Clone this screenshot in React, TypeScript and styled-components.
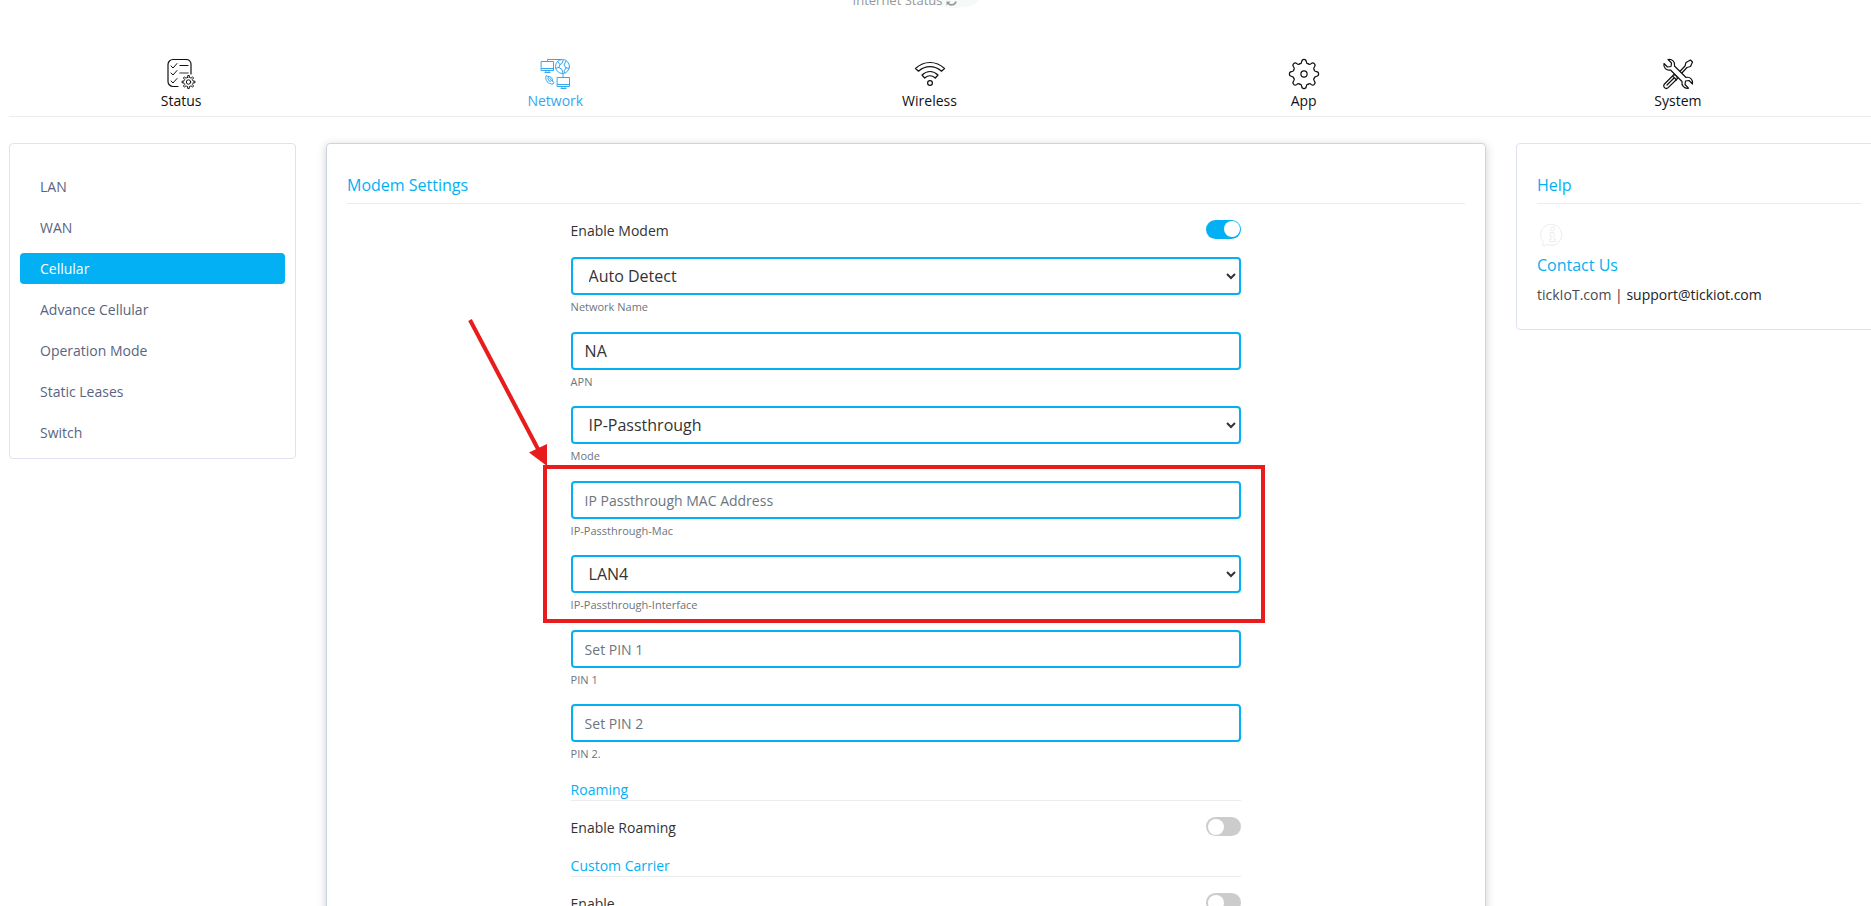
import React, { useState } from "react";
import styled, { createGlobalStyle, css } from "styled-components";

const accent = "#02b0f3";
const line = "#ececec";
const marker = "#e81c1c";

const GlobalStyle = createGlobalStyle`
  *, *::before, *::after { box-sizing: border-box; }
  html, body { margin: 0; background: #fff; overflow: hidden; height: 100vh; }
  body, input, select, button {
    font-family: "Open Sans", "Liberation Sans", sans-serif;
    font-size: 14px;
    color: #333;
  }
`;

const Page = styled.div`
  height: 100vh;
  overflow: hidden;
  padding-left: 9px;
`;

const TopBar = styled.header`
  display: flex;
  align-items: flex-end;
  justify-content: center;
  gap: 4px;
  height: 9px;
  padding-right: 70px;
  overflow: hidden;
  font-size: 13px;
  line-height: 18px;
  color: #94979a;
  background: radial-gradient(ellipse 25px 8px at calc(50% + 14px) 0, #f5faf9 96%, transparent 100%);
`;

const RefreshButton = styled.button`
  display: flex;
  align-items: center;
  height: 18px;
  padding: 0;
  border: 0;
  background: none;
  color: #999;
`;

const Nav = styled.nav`
  margin-top: 49px;
  height: 59px;
  border-bottom: 1px solid ${line};
`;

const TabList = styled.ul`
  display: flex;
  margin: 0 6px 0 -15px;
  padding: 0;
  list-style: none;
`;

const Tab = styled.li`
  flex: 1;
  display: flex;
  justify-content: center;
`;

const TabLink = styled.a<{ $active?: boolean }>`
  display: flex;
  flex-direction: column;
  align-items: center;
  line-height: 22px;
  text-decoration: none;
  color: ${(p) => (p.$active ? "#35a7f0" : "#111")};
`;

const Columns = styled.div`
  display: grid;
  grid-template-columns: 287fr 1160fr 367fr;
  gap: 30px;
  align-items: start;
  margin: 26px -12px 0 0;
`;

const Card = styled.section<{ $raised?: boolean }>`
  border: 1px solid #dfe2ef;
  border-radius: 4px;
  background: #fff;
  ${(p) =>
    p.$raised &&
    css`
      border-color: #ced3e6;
      box-shadow: 0 2px 8px rgba(60, 60, 80, 0.25);
    `}
`;

const SideCard = styled(Card)`
  padding: 27px 10px 10px;
`;

const SideList = styled.ul`
  display: flex;
  flex-direction: column;
  gap: 10px;
  margin: 0;
  padding: 0;
  list-style: none;
`;

const SideLink = styled.a<{ $active?: boolean }>`
  display: block;
  padding: 0 20px;
  border-radius: 4px;
  line-height: 31px;
  text-decoration: none;
  color: ${(p) => (p.$active ? "#fff" : "#59657f")};
  background: ${(p) => (p.$active ? accent : "transparent")};
`;

const BodyCard = styled(Card)`
  padding: 27px 20px 24px;
`;

const Title = styled.h2<{ $plain?: boolean }>`
  margin: 0;
  font-size: 16px;
  font-weight: 400;
  line-height: 28px;
  color: ${accent};
  ${(p) =>
    !p.$plain &&
    css`
      height: 33px;
      border-bottom: 1px solid ${line};
    `}
`;

const Form = styled.form`
  width: 60%;
  margin: 0 auto;
`;

const ToggleLine = styled.label`
  display: flex;
  align-items: center;
  justify-content: space-between;
  height: 53px;
`;

const Switch = styled.input`
  appearance: none;
  width: 35px;
  height: 19px;
  margin: 0 0 3px;
  border-radius: 10px;
  background: #ccc;
  &::before {
    content: "";
    display: block;
    width: 16px;
    height: 16px;
    margin: 2px;
    border-radius: 50%;
    background: #fff;
  }
  &:checked { background: ${accent}; }
  &:checked::before { margin: 1px 1px 1px 18px; }
`;

const Field = styled.div<{ $select?: boolean }>`
  display: flex;
  flex-direction: column;
  height: ${(p) => (p.$select ? 75 : 74)}px;
`;

const control = css`
  width: 100%;
  height: 38px;
  border: 2px solid ${accent};
  border-radius: 4px;
  background: #fff;
  font-size: 16px;
  outline: none;
`;

const TextInput = styled.input`
  ${control}
  padding: 0 12px;
  &::placeholder { font-size: 14px; color: #6c757d; opacity: 1; }
`;

const Select = styled.select`
  ${control}
  padding: 0 0 0 12px;
`;

const Hint = styled.label`
  margin-top: 4px;
  font-size: 11px;
  line-height: 16px;
  color: #6c757d;
`;

const Highlight = styled.div`
  position: relative;
  &::after {
    content: "";
    position: absolute;
    inset: -16px -24px 7px -28px;
    border: 4px solid ${marker};
    pointer-events: none;
  }
`;

const Arrow = styled.svg`
  position: absolute;
  left: -104px;
  top: -163px;
  pointer-events: none;
`;

const SubTitle = styled.h3`
  height: 23px;
  margin: 0;
  border-bottom: 1px solid ${line};
  font-size: 14px;
  font-weight: 400;
  line-height: 24px;
  color: ${accent};
`;

const InfoIcon = styled.svg`
  display: block;
  margin: 18px 0 3px 3px;
`;

const Contact = styled.p`
  margin: 6px 0 0;
  line-height: 20px;
`;

const ContactLink = styled.a<{ $dark?: boolean }>`
  text-decoration: none;
  color: ${(p) => (p.$dark ? "#222" : "#4a4a4a")};
`;

const stroke = {
  fill: "none",
  stroke: "currentColor",
  strokeWidth: 1.2,
  strokeLinecap: "round" as const,
  strokeLinejoin: "round" as const,
};

const gearPath = (cx: number, cy: number, r: number, R: number, teeth: number) => {
  const pts: string[] = [];
  const step = (Math.PI * 2) / teeth;
  for (let i = 0; i < teeth; i++) {
    const a = i * step - Math.PI / 2;
    const at = (rad: number, o: number) =>
      `${(cx + rad * Math.cos(a + o * step)).toFixed(2)} ${(cy + rad * Math.sin(a + o * step)).toFixed(2)}`;
    pts.push(`${i ? "L" : "M"}${at(r, -0.24)}L${at(R, -0.16)}L${at(R, 0.16)}L${at(r, 0.24)}`);
    pts.push(`A${r} ${r} 0 0 1 ${at(r, 0.76)}`);
  }
  return pts.join("") + "Z";
};

const StatusIcon = () => (
  <svg width="32" height="32" viewBox="-1 0 32 32" {...stroke}>
    <path d="M12 28.500H7a5 5 0 0 1-5-5V6.500a5 5 0 0 1 5-5h13.500a4.500 4.500 0 0 1 4.500 4.500v10" />
    <path d="M5 8l2 2 4-4.500M5 15l2 2 4-4.500M5 23l2 2 4-4.500" strokeWidth="1" />
    <path d="M14 7.500h8" strokeWidth="1.200" />
    <path d="M14 15h8" stroke="#777" strokeWidth="1.600" />
    <path d={gearPath(22.5, 24, 4.6, 6.5, 8)} strokeWidth="1" />
    <circle cx="22.500" cy="24" r="2.200" strokeWidth="1" />
  </svg>
);

const NetworkIcon = () => (
  <svg width="32" height="32" viewBox="-1 0 32 32" {...stroke} strokeWidth={1}>
    <rect x="1.500" y="3.500" width="12" height="9" />
    <path d="M1.500 10.500h12M5 14.500h5M6 12.500v2M9 12.500v2M7.500 3.500v-2h14" />
    <circle cx="22.500" cy="8.500" r="7" />
    <path d="M18 4l2 2.500-1 3-3 .5M20 6.500l2-1 1-3M26 3l-2 4 2 3 3 0M19 9.500l3 2 1 4M26 10l-2 3 1 2M23 15.500v4" />
    <rect x="17.500" y="19.500" width="12" height="9" />
    <path d="M17.500 26.500h12M21 30.500h5M22 28.500v2M25 28.500v2" />
    <path d="M6 18c-1.500 4 2 8.500 7 8l1-1.500-2.500-2-1.500 1c-1.500-.8-2-2-2-3.500l.5-1z" />
    <path d="M8.500 18.500c2.500 0 4 1.500 4 4M10 20.500l1 1.500" />
  </svg>
);

const WirelessIcon = () => (
  <svg width="32" height="32" viewBox="0 0 32 32" {...stroke}>
    <path d="M1.500 10.500C10 2.500 22 2.500 30.500 10.500L27.500 13.200C20.500 7.200 11.500 7.200 4.500 13.200z" />
    <path d="M8 17C13 12.500 19 12.500 24 17L21.300 20C18 17.200 14 17.200 10.700 20z" />
    <circle cx="16" cy="25" r="2.400" />
  </svg>
);

const AppIcon = () => (
  <svg width="32" height="32" viewBox="0 0 32 32" {...stroke}>
    {[0, 45, 90, 135, 180, 225, 270, 315].map((a) => (
      <path
        key={a}
        transform={`rotate(${a} 16 16)`}
        d="M11.800 5.800Q13.600 5.600 13.700 3.600Q13.900 1.400 16 1.400Q18.100 1.400 18.300 3.600Q18.400 5.600 20.200 5.800"
      />
    ))}
    <circle cx="16" cy="16" r="3.100" />
  </svg>
);

const SystemIcon = () => (
  <svg width="32" height="32" viewBox="0 0 32 32" {...stroke}>
    <path d="M14.500 18l-2.500-1.500-9.500 9.500a2.600 2.600 0 0 0 3.700 3.700l9.300-9.200zM10.500 18l4 4M5 27l7-7M16 15.500l7-7.500 1-3.500L28.500 2 30.500 4l-2 4.500L25 9.500 18 17" />
    <path
      fill="#fff"
      d="M2 5.500l3.500 3.500L9 8.500 9.500 5 6 1.500C10 .5 13.500 4 12.500 8L24 19.500c4-1.200 7.500 2.500 6.500 6.500L27 22.500l-3.500.5-.5 3.500 3.500 3.700C22.500 31 19.200 27.500 20 23.500L8.500 12C4.500 13 1 9.500 2 5.500z"
    />
  </svg>
);

const tabs = [
  { name: "Status", Icon: StatusIcon },
  { name: "Network", Icon: NetworkIcon },
  { name: "Wireless", Icon: WirelessIcon },
  { name: "App", Icon: AppIcon },
  { name: "System", Icon: SystemIcon },
];

const sections = ["LAN", "WAN", "Cellular", "Advance Cellular", "Operation Mode", "Static Leases", "Switch"];

function ToggleRow({ label, on = false }: { label: string; on?: boolean }) {
  const [checked, setChecked] = useState(on);
  return (
    <ToggleLine>
      {label}
      <Switch type="checkbox" role="switch" checked={checked} onChange={() => setChecked(!checked)} />
    </ToggleLine>
  );
}

function SelectField({ id, label, options }: { id: string; label: string; options: string[] }) {
  return (
    <Field $select>
      <Select id={id}>
        {options.map((o) => (
          <option key={o}>{o}</option>
        ))}
      </Select>
      <Hint htmlFor={id}>{label}</Hint>
    </Field>
  );
}

function InputField({ id, label, ...rest }: { id: string; label: string; placeholder?: string; defaultValue?: string }) {
  return (
    <Field>
      <TextInput id={id} type="text" {...rest} />
      <Hint htmlFor={id}>{label}</Hint>
    </Field>
  );
}

export default function App() {
  return (
    <>
      <GlobalStyle />
      <Page>
        <TopBar>
          <span>Internet Status</span>
          <RefreshButton type="button" aria-label="Refresh">
            <svg width="11" height="11" viewBox="0 0 11 11" fill="none" stroke="currentColor" strokeWidth="1.600">
              <path d="M1 4.500a4.500 4.500 0 0 1 8-1.500M10 6.500a4.500 4.500 0 0 1-8 1.500" />
              <path d="M10.500.5v4h-4zM.5 10.500v-4h4z" fill="currentColor" stroke="none" />
            </svg>
          </RefreshButton>
        </TopBar>
        <Nav>
          <TabList>
            {tabs.map(({ name, Icon }) => (
              <Tab key={name}>
                <TabLink href="#" $active={name === "Network"}>
                  <Icon />
                  {name}
                </TabLink>
              </Tab>
            ))}
          </TabList>
        </Nav>
        <Columns>
          <SideCard>
            <SideList>
              {sections.map((s) => (
                <li key={s}>
                  <SideLink href="#" $active={s === "Cellular"}>
                    {s}
                  </SideLink>
                </li>
              ))}
            </SideList>
          </SideCard>
          <BodyCard $raised>
            <Title>Modem Settings</Title>
            <Form>
              <ToggleRow label="Enable Modem" on />
              <SelectField id="network" label="Network Name" options={["Auto Detect"]} />
              <InputField id="apn" label="APN" defaultValue="NA" />
              <SelectField id="mode" label="Mode" options={["IP-Passthrough"]} />
              <Highlight>
                <InputField id="mac" label="IP-Passthrough-Mac" placeholder="IP Passthrough MAC Address" />
                <SelectField id="iface" label="IP-Passthrough-Interface" options={["LAN4"]} />
                <Arrow width="84" height="150" viewBox="0 0 84 150" aria-hidden="true">
                  <path d="M3 2L71 131" stroke={marker} strokeWidth="4" />
                  <path d="M62 134.500L80 126v22z" fill={marker} />
                </Arrow>
              </Highlight>
              <InputField id="pin1" label="PIN 1" placeholder="Set PIN 1" />
              <InputField id="pin2" label="PIN 2." placeholder="Set PIN 2" />
              <SubTitle>Roaming</SubTitle>
              <ToggleRow label="Enable Roaming" />
              <SubTitle>Custom Carrier</SubTitle>
              <ToggleRow label="Enable" />
            </Form>
          </BodyCard>
          <BodyCard>
            <Title>Help</Title>
            <InfoIcon width="24" height="26" viewBox="0 0 24 26" fill="none" stroke="#ededed">
              <path d="M3 19.500A10.500 10.500 0 1 1 7 22.500L3 24z" />
              <circle cx="12.500" cy="7" r="2" />
              <path d="M10 10.500h4v7h1.500v2h-6v-2H11v-5h-1z" />
            </InfoIcon>
            <Title as="h3" $plain>
              Contact Us
            </Title>
            <Contact>
              <ContactLink href="#">tickIoT.com</ContactLink> |{" "}
              <ContactLink href="#" $dark>
                support@tickiot.com
              </ContactLink>
            </Contact>
          </BodyCard>
        </Columns>
      </Page>
    </>
  );
}
